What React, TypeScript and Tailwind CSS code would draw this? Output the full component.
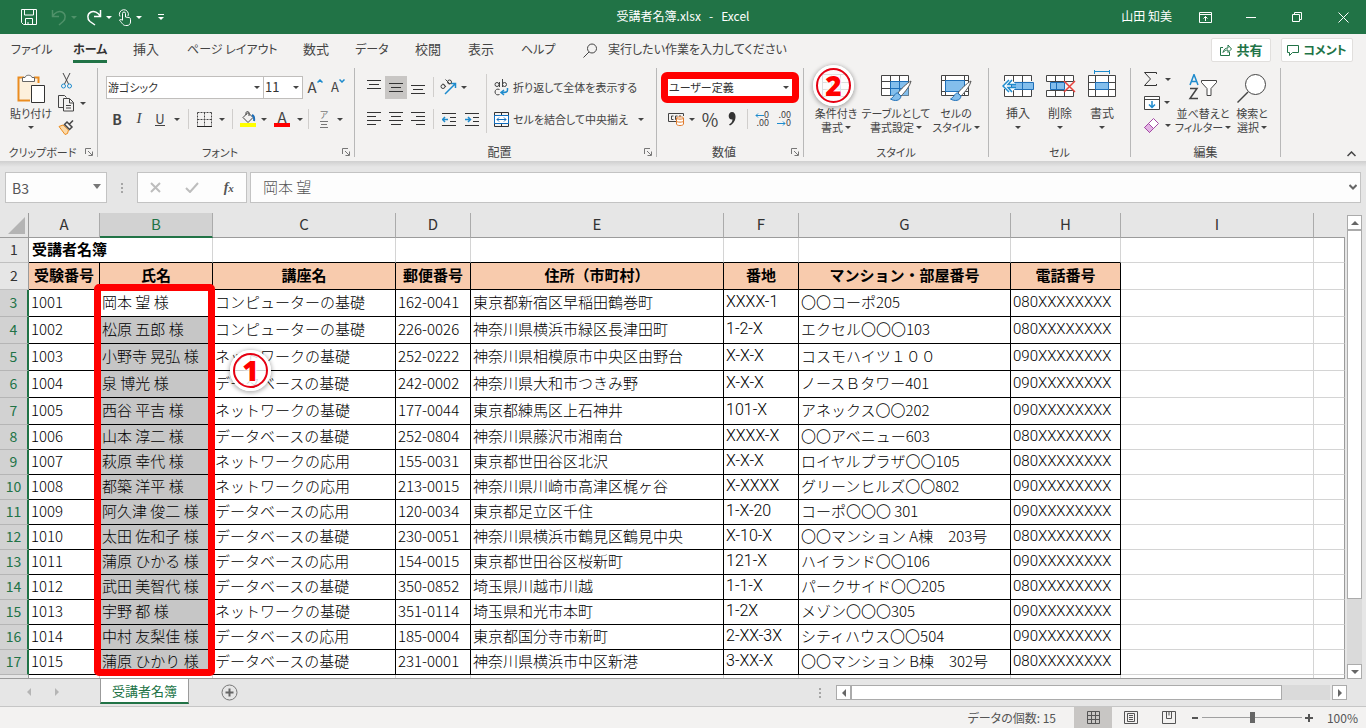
import type { ReactNode } from "react";
import clsx from "clsx";

const TABS = [
  { label: "ファイル", width: "w-[62px]", small: true },
  { label: "ホーム", width: "w-[60px]", small: true, active: true },
  { label: "挿入", width: "w-[54px]" },
  { label: "ページ レイアウト", width: "w-[116px]", small: true },
  { label: "数式", width: "w-[52px]" },
  { label: "データ", width: "w-[60px]", small: true },
  { label: "校閲", width: "w-[53px]" },
  { label: "表示", width: "w-[53px]" },
  { label: "ヘルプ", width: "w-[62px]", small: true },
];

const COLUMNS = [
  { letter: "A", width: "w-[71px]", title: "受験番号" },
  { letter: "B", width: "w-[113px]", title: "氏名" },
  { letter: "C", width: "w-[183px]", title: "講座名" },
  { letter: "D", width: "w-[75px]", title: "郵便番号" },
  { letter: "E", width: "w-[253px]", title: "住所（市町村）" },
  { letter: "F", width: "w-[75px]", title: "番地" },
  { letter: "G", width: "w-[212px]", title: "マンション・部屋番号" },
  { letter: "H", width: "w-[110px]", title: "電話番号" },
];

const ROWS = [
  ["1001", "岡本 望 様", "コンピューターの基礎", "162-0041", "東京都新宿区早稲田鶴巻町", "XXXX-1", "〇〇コーポ205", "080XXXXXXXX"],
  ["1002", "松原 五郎 様", "コンピューターの基礎", "226-0026", "神奈川県横浜市緑区長津田町", "1-2-X", "エクセル〇〇〇103", "080XXXXXXXX"],
  ["1003", "小野寺 晃弘 様", "ネットワークの基礎", "252-0222", "神奈川県相模原市中央区由野台", "X-X-X", "コスモハイツ１００", "090XXXXXXXX"],
  ["1004", "泉 博光 様", "データベースの基礎", "242-0002", "神奈川県大和市つきみ野", "X-X-X", "ノースＢタワー401", "090XXXXXXXX"],
  ["1005", "西谷 平吉 様", "ネットワークの基礎", "177-0044", "東京都練馬区上石神井", "101-X", "アネックス〇〇202", "090XXXXXXXX"],
  ["1006", "山本 淳二 様", "データベースの基礎", "252-0804", "神奈川県藤沢市湘南台", "XXXX-X", "〇〇アベニュー603", "080XXXXXXXX"],
  ["1007", "萩原 幸代 様", "ネットワークの応用", "155-0031", "東京都世田谷区北沢", "X-X-X", "ロイヤルプラザ〇〇105", "080XXXXXXXX"],
  ["1008", "都築 洋平 様", "ネットワークの応用", "213-0015", "神奈川県川崎市高津区梶ヶ谷", "X-XXXX", "グリーンヒルズ〇〇802", "090XXXXXXXX"],
  ["1009", "阿久津 俊二 様", "データベースの応用", "120-0034", "東京都足立区千住", "1-X-20", "コーポ〇〇〇 301", "090XXXXXXXX"],
  ["1010", "太田 佐和子 様", "データベースの基礎", "230-0051", "神奈川県横浜市鶴見区鶴見中央", "X-10-X", "〇〇マンション A棟　203号", "080XXXXXXXX"],
  ["1011", "蒲原 ひかる 様", "データベースの応用", "154-0015", "東京都世田谷区桜新町", "121-X", "ハイランド〇〇106", "090XXXXXXXX"],
  ["1012", "武田 美智代 様", "データベースの基礎", "350-0852", "埼玉県川越市川越", "1-1-X", "パークサイド〇〇205", "080XXXXXXXX"],
  ["1013", "宇野 都 様", "ネットワークの基礎", "351-0114", "埼玉県和光市本町", "1-2X", "メゾン〇〇〇305", "090XXXXXXXX"],
  ["1014", "中村 友梨佳 様", "データベースの応用", "185-0004", "東京都国分寺市新町", "2-XX-3X", "シティハウス〇〇504", "090XXXXXXXX"],
  ["1015", "蒲原 ひかり 様", "データベースの基礎", "231-0001", "神奈川県横浜市中区新港", "3-XX-X", "〇〇マンション B棟　302号", "080XXXXXXXX"],
];

export default function App() {
  return (
    <div className="flex h-screen flex-col overflow-hidden bg-[#e6e6e6] font-['Noto_Sans_CJK_JP',sans-serif] text-[#444444]">
      <TitleBar />
      <TabBar />
      <Ribbon />
      <FormulaBar />
      <Sheet />
      <SheetTabs />
      <StatusBar />
    </div>
  );
}

function Svg({ w, h, children, className }: { w: number; h: number; children: ReactNode; className?: string }) {
  return (
    <svg width={w} height={h} viewBox={`0 0 ${w} ${h}`} fill="none" stroke="currentColor" aria-hidden="true" className={clsx("shrink-0", className)}>
      {children}
    </svg>
  );
}

function Caret() {
  return (
    <Svg w={6} h={3}>
      <path d="M0 0h6L3 3z" fill="currentColor" stroke="none" />
    </Svg>
  );
}

/* ---------- title bar ---------- */

function TitleBar() {
  return (
    <header className="grid h-[34px] shrink-0 grid-cols-[1fr_auto_1fr] items-center bg-[#217346] text-xs text-white">
      <div className="flex items-center pl-5">
        <TitleButton label="上書き保存" className="w-[31px]">
          <Svg w={18} h={18}>
            <path d="M1.5 1.5h15v15H3.5l-2-2zM4.5 2v5h9V2M5.5 16v-5.500h7V16M8 14v2" />
          </Svg>
        </TitleButton>
        <TitleButton label="元に戻す" className="w-[35px] text-[#4f9169]">
          <Svg w={16} h={17}>
            <path d="M1.500 1v6.500H8M1.500 7.500C4 3.500 8 1.500 11 3c4 2 4 7 1 9.500L8 16" strokeWidth="1.500" />
          </Svg>
          <Caret />
        </TitleButton>
        <TitleButton label="やり直し" className="w-[32px]">
          <Svg w={16} h={17}>
            <path d="M14.500 1v6.500H8M14.500 7.500C12 3.500 8 1.500 5 3 1 5 1 10 4 12.500L9 16" strokeWidth="1.500" />
          </Svg>
          <Caret />
        </TitleButton>
        <TitleButton label="タッチ/マウス モードの切り替え" className="w-[40px]">
          <Svg w={14} h={18}>
            <path d="M4.500 12V5.500a1.500 1.500 0 0 1 3 0V9l3.500.5c1 .2 1.500.8 1.500 1.800V14c0 2-1.500 3.500-3.500 3.500H7.500c-2 0-3-1.500-6-5.500 1-1 2-.5 3 .5" />
            <path d="M2 8.500a4.500 4.500 0 1 1 8-.5" />
          </Svg>
          <Caret />
        </TitleButton>
        <TitleButton label="クイック アクセス ツール バーのカスタマイズ" className="w-5">
          <Svg w={6} h={6}>
            <path d="M0 .5h6" />
            <path d="M0 3h6L3 6z" fill="currentColor" stroke="none" />
          </Svg>
        </TitleButton>
      </div>
      <h1 className="pb-0.5 leading-5 whitespace-pre">受講者名簿.xlsx&nbsp;&nbsp; -&nbsp;&nbsp; Excel</h1>
      <div className="flex items-center justify-end">
        <span className="pr-2.5 pb-0.5 leading-5">山田 知美</span>
        <TitleButton label="リボンの表示オプション" className="w-[46px]">
          <Svg w={13} h={11}>
            <path d="M.5.5h12v10H.5zM1 2.500h11M6.500 9V4.500M4.500 6.500l2-2 2 2" />
          </Svg>
        </TitleButton>
        <TitleButton label="最小化" className="w-[46px]">
          <Svg w={10} h={1}>
            <path d="M0 .5h10" />
          </Svg>
        </TitleButton>
        <TitleButton label="元に戻す (縮小)" className="w-[46px]">
          <Svg w={10} h={10}>
            <path d="M.5 2.500h7v7h-7zM2.500 2V.5h7v7H8" />
          </Svg>
        </TitleButton>
        <TitleButton label="閉じる" className="w-[46px]">
          <Svg w={11} h={11}>
            <path d="M.5.5l10 10M10.500.5l-10 10" />
          </Svg>
        </TitleButton>
      </div>
    </header>
  );
}

function TitleButton({ label, className, children }: { label: string; className: string; children: ReactNode }) {
  return (
    <button type="button" aria-label={label} className={clsx("flex h-8 items-center gap-1", className, className === "w-[46px]" && "justify-center")}>
      {children}
    </button>
  );
}

/* ---------- ribbon tabs ---------- */

function TabBar() {
  return (
    <nav className="flex h-8 shrink-0 items-center bg-[#f3f2f1] pl-[11px] [font-feature-settings:'palt']">
      {TABS.map((tab) => (
        <div key={tab.label} className={clsx("flex shrink-0", tab.width)}>
          <button
            type="button"
            className={clsx(
              "h-[26px] border-b-3 leading-5 whitespace-nowrap",
              tab.small ? "text-xs leading-5" : "text-[13px]",
              tab.active ? "border-[#217346] font-bold text-[#333333]" : "border-transparent",
            )}
          >
            {tab.label}
          </button>
        </div>
      ))}
      <label className="flex min-w-0 flex-1 items-center gap-2.5">
        <Svg w={15} h={15}>
          <circle cx="9" cy="5.500" r="4.500" />
          <path d="M6 9L.5 14.500" />
        </Svg>
        <input
          aria-label="操作アシスト"
          placeholder="実行したい作業を入力してください"
          className="h-5 w-[220px] bg-transparent pb-0.5 text-xs leading-5 outline-none placeholder:text-[#444444]"
        />
      </label>
      <div className="flex gap-2.5 pr-[13px] text-[#217346]">
        <button type="button" className="flex h-6 w-[60px] items-center justify-center gap-1 rounded-xs border border-[#e1dfdd] bg-white text-[13px] font-bold">
          <Svg w={13} h={12}>
            <path d="M4 3.500H1.500v8h9V8M4 8.500c.5-3 2.500-4.500 5-4.500V1l3.500 4L9 8.500V6C7 6 5.500 6.500 4 8.500z" />
          </Svg>
          共有
        </button>
        <button type="button" className="flex h-6 w-[72px] items-center justify-center gap-1 rounded-xs border border-[#e1dfdd] bg-white text-xs font-bold">
          <Svg w={12} h={11}>
            <path d="M.5.5h11v7H5.500l-3 3v-3h-2z" />
          </Svg>
          コメント
        </button>
      </div>
    </nav>
  );
}

/* ---------- ribbon ---------- */

function Ribbon() {
  return (
    <section className="shrink-0 text-xs [font-feature-settings:'palt']">
      <div className="flex h-[95px] bg-[#f3f2f1] pt-0.5">
        <ClipboardGroup />
        <FontGroup />
        <AlignmentGroup />
        <NumberGroup />
        <StyleGroup />
        <CellsGroup />
        <EditingGroup />
        <div className="flex flex-1 items-end justify-end pr-2.5 pb-1">
          <button type="button" aria-label="リボンを折りたたむ">
            <Svg w={9} h={6}>
              <path d="M.5 5l4-4 4 4" strokeWidth="1.500" />
            </Svg>
          </button>
        </div>
      </div>
      <div className="h-1.5 bg-linear-to-b from-[#cfcfcf] to-[#e6e6e6]" />
    </section>
  );
}

function RibbonGroup({ label, width, launcher, small, children }: { label: string; width: string; launcher?: boolean; small?: boolean; children: ReactNode }) {
  return (
    <div className={clsx("flex shrink-0", width)}>
      <div className="flex min-w-0 flex-1 flex-col">
        <div className="flex h-[75px]">{children}</div>
        <div className="flex h-[18px] items-center">
          <span className={clsx("flex-1 text-center whitespace-nowrap", small && "text-[11px]")}>{label}</span>
          {launcher && (
            <button type="button" aria-label={`${label}の設定`} className="pr-1">
              <Svg w={8} h={8}>
                <path d="M.5 6V.5H6M3 3l4 4M7.500 3.500v4h-4" stroke="#777777" />
              </Svg>
            </button>
          )}
        </div>
      </div>
      <div className="h-[89px] w-px bg-[#b8b8b8]" />
    </div>
  );
}

function Tool({ label, className, active, children }: { label: string; className?: string; active?: boolean; children: ReactNode }) {
  return (
    <button type="button" aria-label={label} className={clsx("flex h-[23px] shrink-0 items-center justify-center", active && "bg-[#c8c6c4]", className ?? "w-[22px]")}>
      {children}
    </button>
  );
}

function Divider() {
  return (
    <div className="flex w-2 shrink-0 justify-center">
      <div className="h-5 w-px bg-[#d0cecc]" />
    </div>
  );
}

function BigButton({ lines, width, icon, small }: { lines: string[]; width: string; icon: ReactNode; small?: boolean }) {
  return (
    <button type="button" className={clsx("flex shrink-0 flex-col items-center pt-1.5 whitespace-nowrap", small ? "text-[11px] leading-[14px]" : "text-xs leading-[14px]", width)}>
      <span className="flex h-8 justify-center">{icon}</span>
      <span>{lines[0]}</span>
      <span className="flex h-[14px] items-center gap-0.5">
        {lines[1]}
        <Caret />
      </span>
    </button>
  );
}

function ClipboardGroup() {
  return (
    <RibbonGroup label="クリップボード" width="w-[98px]" launcher small>
      <div className="pl-1">
        <BigButton
          lines={["貼り付け"]}
          width="w-[54px]"
          small
          icon={
            <Svg w={28} h={31}>
              <path d="M7 3.500H1.500v23H13M17 3.500h4.500V9" stroke="#eb8c1f" strokeWidth="2" />
              <path d="M3 5h3v2h11V5h3v6h-6v14H3z" fill="#fdf0dc" stroke="none" />
              <path d="M5.500 7.500v-4H8c.5-3 6.500-3 7 0h2.500v4z" fill="#fff" stroke="#666" />
              <path d="M14.500 11.500h13v17h-13z" fill="#fff" stroke="#333" />
            </Svg>
          }
        />
      </div>
      <div className="flex flex-col pt-px">
        <Tool label="切り取り" className="w-4">
          <Svg w={11} h={16}>
            <path d="M2 0l5.500 11M9 0L3.500 11" stroke="#444" />
            <circle cx="2.500" cy="13" r="2" stroke="#1e8bcd" />
            <circle cx="8.500" cy="13" r="2" stroke="#1e8bcd" />
          </Svg>
        </Tool>
        <Tool label="コピー" className="w-7 gap-1.5">
          <Svg w={16} h={17}>
            <path d="M5 12.500H.5V.5h6l2 2M5.500 3.500h6l4 4v8.500h-10zM11.500 4v4h4M8 10.500h5M8 13h5" />
          </Svg>
          <Caret />
        </Tool>
        <Tool label="書式のコピー/貼り付け" className="w-4">
          <Svg w={17} h={16}>
            <path d="M1 7.500l4-1.500 5.500 5-1 3.500L7 15.500z" fill="#fbd9a8" stroke="#eb8c1f" />
            <path d="M6.500 5.500L9 3l5 5-2.500 2.500zM11 5.500L15 1.500" stroke="#444" strokeWidth="1.500" />
          </Svg>
        </Tool>
      </div>
    </RibbonGroup>
  );
}

function FontGroup() {
  return (
    <RibbonGroup label="フォント" width="w-[257px]" launcher small>
      <div className="flex flex-1 flex-col pt-[3px] pl-2">
        <div className="flex h-8 items-center">
          <SelectBox label="フォント名" value="游ゴシック" className="w-[158px] text-[11px]" />
          <SelectBox label="フォント サイズ" value="11" className="-ml-px w-10 text-[13px]" />
          <Tool label="フォント サイズの拡大" className="w-6 text-[15px]">
            A
            <Svg w={6} h={4} className="mb-3">
              <path d="M.5 3.500L3 1l2.500 2.500" stroke="#1e8bcd" strokeWidth="1.500" />
            </Svg>
          </Tool>
          <Tool label="フォント サイズの縮小" className="w-[22px] text-[13px]">
            A
            <Svg w={6} h={4} className="mb-3">
              <path d="M.5.5L3 3 5.500.5" stroke="#1e8bcd" strokeWidth="1.500" />
            </Svg>
          </Tool>
        </div>
        <div className="flex h-8 items-center">
          <Tool label="太字">
            <span className="text-sm font-bold">B</span>
          </Tool>
          <Tool label="斜体">
            <span className="font-['Liberation_Serif',serif] text-[15px] italic">I</span>
          </Tool>
          <Tool label="下線" className="w-5">
            <span className="border-b border-current text-[13px] leading-[13px]">U</span>
          </Tool>
          <Tool label="下線の種類" className="w-[14px]">
            <Caret />
          </Tool>
          <Divider />
          <Tool label="罫線" className="w-6">
            <Svg w={15} h={15}>
              <path d="M.5.5h14M.5.5v13M14.500.5v13M7.500.5v13M.5 7.500h14" strokeDasharray="2 1" />
              <path d="M0 14.500h15" stroke="#222" />
            </Svg>
          </Tool>
          <Tool label="罫線の種類" className="w-3">
            <Caret />
          </Tool>
          <Divider />
          <Tool label="塗りつぶしの色" className="w-6">
            <Svg w={16} h={16}>
              <path d="M8 1.500l5 5-5 5-5-5zM6 4V2c0-2 3-2 3 0v3" stroke="#444" />
              <path d="M12 4c2 1 2.500 3 2 6" stroke="#1e6fb8" strokeWidth="2" />
              <path d="M0 12h16v4H0z" fill="#ffff00" stroke="none" />
            </Svg>
          </Tool>
          <Tool label="塗りつぶしの色の選択" className="w-2">
            <Caret />
          </Tool>
          <Tool label="フォントの色" className="w-7">
            <span className="w-4 border-b-4 border-[#ff0000] text-center text-[15px] leading-3">A</span>
          </Tool>
          <Tool label="フォントの色の選択" className="w-2">
            <Caret />
          </Tool>
          <Divider />
          <Tool label="ふりがなの表示" className="w-6">
            <span className="flex flex-col items-center gap-0.5 text-[9px] leading-[9px] text-[#777777]">
              <span>ア</span>
              <Svg w={8} h={7}>
                <path d="M0 .5h8M1 3.500h6M0 6.500h8" />
              </Svg>
            </span>
          </Tool>
          <Tool label="ふりがなの設定" className="w-2">
            <Caret />
          </Tool>
        </div>
      </div>
    </RibbonGroup>
  );
}

function SelectBox({ label, value, className }: { label: string; value: string; className: string }) {
  return (
    <div className={clsx("relative shrink-0", className)}>
      <select aria-label={label} defaultValue={value} className="h-[23px] w-full appearance-none border border-[#c0bebc] bg-white px-px leading-5 text-[#333333] outline-none">
        <option>{value}</option>
      </select>
      <span className="pointer-events-none absolute top-2.5 right-1">
        <Caret />
      </span>
    </div>
  );
}

function Lines({ d }: { d: string }) {
  return (
    <Svg w={14} h={14}>
      <path d={d} stroke="#333" />
    </Svg>
  );
}

function AlignmentGroup() {
  return (
    <RibbonGroup label="配置" width="w-[302px]" launcher>
      <div className="flex w-[131px] shrink-0 flex-col pt-[3px] pl-2">
        <div className="flex h-8 items-center">
          <Tool label="上揃え">
            <Lines d="M0 .5h14M2 4.500h10M0 8.500h14" />
          </Tool>
          <Tool label="上下中央揃え" active>
            <Lines d="M0 3.500h14M2 7.500h10M0 11.500h14" />
          </Tool>
          <Tool label="下揃え">
            <Lines d="M0 5.500h14M2 9.500h10M0 13.500h14" />
          </Tool>
          <Divider />
          <Tool label="方向" className="w-8 gap-1">
            <Svg w={17} h={16}>
              <path d="M5 15L15.500 4.500M11 4.500h4.500V9" stroke="#1e8bcd" strokeWidth="1.500" />
              <circle cx="3" cy="7.500" r="2" />
              <path d="M3 4.500l3 3.500" />
              <path d="M5.500.5L10 5" />
              <circle cx="9.500" cy="3" r="2" />
            </Svg>
            <Caret />
          </Tool>
        </div>
        <div className="flex h-8 items-center">
          <Tool label="左揃え">
            <Lines d="M0 .5h14M0 4.500h9M0 8.500h14M0 12.500h9" />
          </Tool>
          <Tool label="中央揃え">
            <Lines d="M0 .5h14M2 4.500h10M0 8.500h14M2 12.500h10" />
          </Tool>
          <Tool label="右揃え">
            <Lines d="M0 .5h14M5 4.500h9M0 8.500h14M5 12.500h9" />
          </Tool>
          <Divider />
          <Tool label="インデントを減らす" className="w-6">
            <Svg w={14} h={13}>
              <path d="M0 .5h14M8 4.500h6M8 8.500h6M0 12.500h14" stroke="#333" />
              <path d="M6 6.500H1M3 4l-2.500 2.500L3 9" stroke="#1e8bcd" strokeWidth="1.500" />
            </Svg>
          </Tool>
          <Tool label="インデントを増やす">
            <Svg w={14} h={13}>
              <path d="M0 .5h14M8 4.500h6M8 8.500h6M0 12.500h14" stroke="#333" />
              <path d="M0 6.500h5M3 4l2.500 2.500L3 9" stroke="#1e8bcd" strokeWidth="1.500" />
            </Svg>
          </Tool>
        </div>
      </div>
      <div className="mt-1.5 h-[59px] w-px bg-[#d0cecc]" />
      <div className="flex flex-1 flex-col pt-[3px] pl-[7px] text-[11px] whitespace-nowrap">
        <button type="button" className="flex h-8 items-center gap-1">
          <Svg w={15} h={17}>
            <circle cx="3" cy="5.500" r="2" />
            <path d="M5.500 3v5M8.500 0v8M5.500 10.500c-2-1-4.500 0-4.500 2.500s2.500 3.500 4.500 2.500" />
            <circle cx="10.500" cy="5.500" r="2" />
            <path d="M13.500 9v2c0 2-1 2.500-6 2.500M10 11l-3 2.500 3 2.500" stroke="#1e8bcd" strokeWidth="1.500" />
          </Svg>
          折り返して全体を表示する
        </button>
        <button type="button" className="flex h-8 items-center gap-1">
          <Svg w={15} h={15}>
            <path d="M.5.5h14v14H.5zM7.500 0v3M7.500 12v3" stroke="#333" />
            <path d="M.5 3.500h14v8H.5z" fill="#fff" stroke="#0f6cbd" />
            <path d="M3 7.500h9M5 5.500l-2 2 2 2M10 5.500l2 2-2 2" stroke="#0f6cbd" />
          </Svg>
          <span className="pr-1.5">セルを結合して中央揃え</span>
          <Caret />
        </button>
      </div>
    </RibbonGroup>
  );
}

function NumberGroup() {
  return (
    <RibbonGroup label="数値" width="w-[147px]" launcher>
      <div className="flex flex-1 flex-col pt-[3px] pl-2.5">
        <div className="flex h-8 items-center">
          <div className="relative">
            <SelectBox label="表示形式" value="ユーザー定義" className="w-[126px] text-[11px]" />
            <div className="pointer-events-none absolute -inset-x-1.5 -inset-y-1 rounded-md border-7 border-[#ff0000]" />
          </div>
        </div>
        <div className="flex h-8 items-center">
          <Tool label="通貨表示形式" className="w-[18px]">
            <Svg w={17} h={14}>
              <path d="M8 9.500H.5v-8h15V4M5.500 4h-2v3.500h2M9.500 4h-2v3.500h1M13 4h-2" stroke="#444" />
              <path d="M8.500 6v6c0 2 7 2 7 0V6c0-1.500-7-1.500-7 0c0 1.500 7 1.500 7 0M8.500 9c0 1.500 7 1.500 7 0" fill="#fff" stroke="#e07b2c" />
            </Svg>
          </Tool>
          <Tool label="通貨の選択" className="w-[14px]">
            <Caret />
          </Tool>
          <Tool label="パーセント スタイル">
            <span className="text-lg leading-5">%</span>
          </Tool>
          <Tool label="桁区切りスタイル">
            <Svg w={8} h={14}>
              <path d="M4 0c5 0 5 10-2 13.500L1 12.500c2-1 3.500-3 3.500-5C-1 8 0 0 4 0z" fill="#333" stroke="none" />
            </Svg>
          </Tool>
          <Divider />
          <Tool label="小数点以下の表示桁数を増やす">
            <span className="flex flex-col items-end text-[9px] leading-2">
              <span className="flex items-center">
                <Svg w={9} h={5}>
                  <path d="M9 2.500H1M3 .5l-2 2 2 2" stroke="#1e8bcd" />
                </Svg>
                0
              </span>
              <span>.00</span>
            </span>
          </Tool>
          <Tool label="小数点以下の表示桁数を減らす">
            <span className="flex flex-col items-end text-[9px] leading-2">
              <span>.00</span>
              <span className="flex items-center">
                <Svg w={9} h={5}>
                  <path d="M0 2.500h8M6 .5l2 2-2 2" stroke="#1e8bcd" />
                </Svg>
                0
              </span>
            </span>
          </Tool>
        </div>
      </div>
    </RibbonGroup>
  );
}

function Brush() {
  return (
    <>
      <path d="M30 7c-4 2-11 9-13 12l3 3c4-4 9-10 10-15z" fill="#fff" stroke="#555" />
      <path d="M16.500 19c-3 0-3 4-7 6 4 2.500 10 2 10.500-3z" fill="#83beec" stroke="#1e6fb8" />
    </>
  );
}

function StyleGroup() {
  return (
    <RibbonGroup label="スタイル" width="w-[185px]" small>
      <div className="relative flex pl-0.5">
        <BigButton
          lines={["条件付き", "書式"]}
          width="w-[60px]"
          small
          icon={
            <Svg w={28} h={28}>
              <path d="M.5.5h27v22H.5zM9.500 0v22M18.500 0v22M0 8.500h28M0 15.500h28" stroke="#555" />
              <path d="M9.500 8.500h9v7h-9z" fill="#83beec" stroke="#1e6fb8" />
            </Svg>
          }
        />
        <BigButton
          lines={["テーブルとして", "書式設定"]}
          width="w-[60px]"
          small
          icon={
            <Svg w={31} h={28}>
              <path d="M.5 1.500h27v20H.5z" fill="#fff" stroke="#444" />
              <path d="M9.500 7.500h18v14h-18z" fill="#83beec" stroke="none" />
              <path d="M9.500 1.500v20M18.500 1.500v6M.5 7.500h27M.5 14.500h9" stroke="#444" />
              <path d="M9.500 7.500v14M18.500 7.500v14M9.500 7.500h18M9.500 14.500h18" stroke="#1e6fb8" />
              <Brush />
            </Svg>
          }
        />
        <BigButton
          lines={["セルの", "スタイル"]}
          width="w-[60px]"
          small
          icon={
            <Svg w={31} h={28}>
              <path d="M.5 1.500h27v20H.5zM4.500 1.500v20M23.500 1.500v20M.5 6.500h27M.5 17.500h27" fill="#fff" stroke="#444" />
              <path d="M4.500 6.500h19v11h-19z" fill="#83beec" stroke="#1e6fb8" />
              <Brush />
            </Svg>
          }
        />
        <div className="absolute -top-[3px] left-[9px]">
          <StepBadge value="2" />
        </div>
      </div>
    </RibbonGroup>
  );
}

function CellsGroup() {
  return (
    <RibbonGroup label="セル" width="w-[142px]" small>
      <div className="flex pl-2">
        <BigButton
          lines={["挿入"]}
          width="w-[42px]"
          icon={
            <Svg w={32} h={24}>
              <path d="M2.500 7V1.500h27V7M2.500 15v7.500h27V15M11.500 1.500v21M20.500 1.500v21" fill="#fff" stroke="#444" />
              <path d="M9.500 8.500h22v7h-22zM20.500 8.500v7" fill="#83beec" stroke="#1e6fb8" />
              <path d="M14 10.500H6L10 6M14 13.500H6l4 4.500M7 6l-6 6 6 6" fill="#fff" stroke="#1e8bcd" strokeWidth="1.500" />
            </Svg>
          }
        />
        <BigButton
          lines={["削除"]}
          width="w-[42px]"
          icon={
            <Svg w={31} h={24}>
              <path d="M1.500 7.500v-6h27v6zM1.500 16.500v6h27v-6zM10.500 1.500v6M19.500 1.500v6M10.500 16.500v6M19.500 16.500v6" fill="#fff" stroke="#444" />
              <path d="M5.500 8.500h14v7h-14zM11.500 8.500v7" fill="#83beec" stroke="#1e6fb8" />
              <path d="M19 7l11 11M30 7L19 18" stroke="#e8413b" strokeWidth="1.500" />
            </Svg>
          }
        />
        <BigButton
          lines={["書式"]}
          width="w-[42px]"
          icon={
            <Svg w={28} h={28} className="-mt-1">
              <path d="M6.500 0v4M21.500 0v4M6.500 1.500h15" stroke="#1e8bcd" />
              <path d="M.5 5.500h27v21H.5zM7.500 5.500v21M20.500 5.500v21M.5 12.500h27M.5 19.500h27" fill="#fff" stroke="#444" />
              <path d="M7.500 12.500h13v7h-13z" fill="#83beec" stroke="#1e6fb8" />
            </Svg>
          }
        />
      </div>
    </RibbonGroup>
  );
}

function EditingGroup() {
  return (
    <RibbonGroup label="編集" width="w-[150px]">
      <div className="flex flex-col pl-2.5">
        <Tool label="オート SUM" className="w-8 gap-2">
          <Svg w={13} h={15}>
            <path d="M12.500 2V.5H.5l6 6.500-6 6.500h12V12" stroke="#333" />
          </Svg>
          <Caret />
        </Tool>
        <Tool label="フィル" className="w-8 gap-1">
          <Svg w={16} h={14}>
            <path d="M.5.5h15v13H.5zM.5 3.500h15" fill="#fff" stroke="#444" />
            <path d="M8 5v6.500M5 8.500l3 3 3-3" stroke="#1e8bcd" strokeWidth="1.500" />
          </Svg>
          <Caret />
        </Tool>
        <Tool label="クリア" className="w-8 gap-1.5">
          <Svg w={15} h={15}>
            <path d="M9.500.5l5 5-9 9-5-5z" fill="#fff" stroke="#a349a4" />
            <path d="M4.500 5.500l5 5-4 4-5-5z" fill="#e3b3e4" stroke="#a349a4" />
          </Svg>
          <Caret />
        </Tool>
      </div>
      <div className="flex pl-0.5">
        <BigButton
          lines={["並べ替えと", "フィルター"]}
          width="w-14"
          small
          icon={
            <Svg w={30} h={28}>
              <path d="M2 11L6 .5 10 11M3.500 7.500h5" stroke="#1e8bcd" strokeWidth="1.500" />
              <path d="M2 14.500h7l-7 10h8" stroke="#444" strokeWidth="1.500" />
              <path d="M13.500 6.500h15v2l-5.500 6v7h-4v-7l-5.500-6z" fill="#fff" stroke="#444" />
            </Svg>
          }
        />
        <BigButton
          lines={["検索と", "選択"]}
          width="w-[42px]"
          small
          icon={
            <Svg w={30} h={30}>
              <circle cx="18.500" cy="10.500" r="10" fill="#fff" stroke="#444" />
              <path d="M11 18L.5 28.500" stroke="#444" strokeWidth="1.500" />
            </Svg>
          }
        />
      </div>
    </RibbonGroup>
  );
}

/* Numbered step marker that floats over the window. */
function StepBadge({ value }: { value: string }) {
  return (
    <div className="pointer-events-none rounded-full border-3 border-white shadow-[0_1px_4px_1px_rgba(0,0,0,0.3)]">
      <div className="flex size-[35px] items-center justify-center rounded-full border-2 border-[#e60012] bg-white/80 pb-0.5 font-['Noto_Sans',sans-serif] text-[28px] leading-none font-black text-[#ff0000] [text-shadow:0_0_3px_#fff,0_0_3px_#fff,0_0_2px_#fff]">
        {value}
      </div>
    </div>
  );
}

/* ---------- formula bar ---------- */

function FormulaBar() {
  return (
    <section className="flex h-[46px] shrink-0 items-start px-[5px] pt-[5px] text-[#555555]">
      <label className="relative w-[102px] shrink-0">
        <input aria-label="名前ボックス" defaultValue="B3" className="h-[31px] w-full border border-[#c3c3c3] bg-[#fdfdfd] px-1.5 text-sm outline-none" />
        <Svg w={8} h={5} className="absolute top-3 right-1.5">
          <path d="M0 0h8L4 5z" fill="#777" stroke="none" />
        </Svg>
      </label>
      <div className="flex h-[31px] w-[30px] shrink-0 items-center justify-center">
        <VerticalDots />
      </div>
      <div className="flex h-[31px] w-[110px] shrink-0 items-center justify-around border border-[#c3c3c3] bg-[#fdfdfd]">
        <button type="button" aria-label="キャンセル">
          <Svg w={11} h={11}>
            <path d="M1 1l9 9M10 1l-9 9" stroke="#bdbdbd" strokeWidth="2" />
          </Svg>
        </button>
        <button type="button" aria-label="入力">
          <Svg w={14} h={11}>
            <path d="M1 6l4 4 8-9" stroke="#bdbdbd" strokeWidth="2" />
          </Svg>
        </button>
        <button type="button" aria-label="関数の挿入" className="font-['Liberation_Serif',serif] text-sm leading-5 font-bold italic">
          f<span className="text-[11px]">x</span>
        </button>
      </div>
      <label className="relative ml-[3px] min-w-0 flex-1">
        <input aria-label="数式バー" defaultValue="岡本 望" className="h-[31px] w-full border border-[#c3c3c3] bg-[#fdfdfd] px-3 pb-0.5 text-[15px] font-light outline-none" />
        <Svg w={8} h={6} className="absolute top-3 right-1">
          <path d="M.5 1L4 4.500 7.500 1" stroke="#666" strokeWidth="2" />
        </Svg>
      </label>
    </section>
  );
}

function VerticalDots() {
  return (
    <Svg w={2} h={10}>
      <path d="M0 0h2v2H0zM0 4h2v2H0zM0 8h2v2H0z" fill="#a6a6a6" stroke="none" />
    </Svg>
  );
}

/* ---------- sheet ---------- */

function Sheet() {
  return (
    <main className="relative flex min-h-0 flex-1">
      <div className="min-w-0 flex-1 overflow-hidden border-b border-[#9b9b9b]">
        <table className="w-full table-fixed border-separate border-spacing-0 text-[15px] leading-5 text-black">
          <colgroup>
            <col className="w-[29px]" />
            {COLUMNS.map((column) => (
              <col key={column.letter} className={column.width} />
            ))}
            <col className="w-[193px]" />
            <col />
          </colgroup>
          <thead>
            <tr className="h-[25px] bg-[#e6e6e6] text-[#333333]">
              <th className="border-r border-b border-[#9b9b9b] p-0">
                <Svg w={17} h={17} className="ml-2">
                  <path d="M17 0v17H0z" fill="#b4b4b4" stroke="none" />
                </Svg>
              </th>
              {COLUMNS.map((column) => (
                <th
                  key={column.letter}
                  scope="col"
                  className={clsx(
                    "border-r border-r-[#ababab] p-0 pb-0.5 font-normal",
                    column.letter === "B" ? "border-b-2 border-b-[#217346] bg-[#d2d2d2] text-[#217346]" : "border-b border-b-[#9b9b9b]",
                  )}
                >
                  {column.letter}
                </th>
              ))}
              <th scope="col" className="border-r border-b border-r-[#ababab] border-b-[#9b9b9b] p-0 pb-0.5 font-normal">
                I
              </th>
              <th className="border-b border-[#9b9b9b] p-0" />
            </tr>
          </thead>
          <tbody>
            <tr className="h-[25px] bg-white">
              <RowNumber value={1} />
              <th colSpan={2} className="border-r border-b border-r-[#d4d4d4] border-b-black p-0 pb-0.5 pl-[3px] text-left font-bold">
                受講者名簿
              </th>
              {COLUMNS.slice(2).map((column) => (
                <td key={column.letter} className="border-r border-b border-r-[#d4d4d4] border-b-black" />
              ))}
              <BlankCells />
            </tr>
            <tr className="h-[27px] bg-white">
              <RowNumber value={2} />
              {COLUMNS.map((column) => (
                <th key={column.letter} className="border-r border-b border-black bg-[#f8cbad] p-0 pb-0.5 font-bold whitespace-nowrap">
                  {column.title}
                </th>
              ))}
              <BlankCells />
            </tr>
            {ROWS.map((row, index) => (
              <tr key={row[0]} className={clsx("bg-white", index < 5 ? "h-[27px]" : "h-[25px]")}>
                <RowNumber value={index + 3} selected />
                {row.map((value, col) => (
                  <td
                    key={COLUMNS[col].letter}
                    className={clsx(
                      "border-r border-b border-black p-0 pb-0.5 pl-0.5 font-light whitespace-nowrap",
                      col === 1 && index > 0 && "bg-[#c6c6c6]",
                      col === 5 && "font-['Roboto',sans-serif] text-base leading-5",
                      col === 7 && "font-['Roboto',sans-serif]",
                    )}
                  >
                    {value}
                  </td>
                ))}
                <BlankCells />
              </tr>
            ))}
            <tr className="h-6 bg-white">
              <td className="border-r border-[#9b9b9b] bg-[#e6e6e6]" />
              {COLUMNS.map((column) => (
                <td key={column.letter} className="border-r border-[#d4d4d4]" />
              ))}
              <BlankCells />
            </tr>
          </tbody>
        </table>
      </div>
      <div className="flex w-[21px] shrink-0 flex-col">
        <div className="flex min-h-0 flex-1 flex-col pt-0.5 pr-1 pl-0.5">
          <ScrollButton label="上へスクロール" d="M0 4h8L4 0z" />
          <div className="min-h-0 flex-1 bg-[#dadada]">
            <div className="h-[85%] border border-[#ababab] bg-white" />
          </div>
          <ScrollButton label="下へスクロール" d="M0 0h8L4 4z" />
        </div>
      </div>
      <div className="pointer-events-none absolute top-[71px] left-[94px] h-[392px] w-[121px] rounded-[5px] border-7 border-[#ff0000]" />
      <div className="absolute top-[137px] left-[230px]">
        <StepBadge value="1" />
      </div>
    </main>
  );
}

function RowNumber({ value, selected }: { value: number; selected?: boolean }) {
  return (
    <th
      scope="row"
      className={clsx(
        "border-b p-0 pb-0.5 text-center text-sm leading-5 font-normal",
        selected ? "border-r-2 border-r-[#217346] border-b-[#b5b5b5] bg-[#d2d2d2] text-[#217346]" : "border-r border-r-[#9b9b9b] border-b-[#c0c0c0] bg-[#e6e6e6] text-[#333333]",
      )}
    >
      {value}
    </th>
  );
}

function BlankCells() {
  return (
    <>
      <td className="border-r border-b border-[#d4d4d4]" />
      <td className="border-r border-b border-r-[#9b9b9b] border-b-[#d4d4d4]" />
    </>
  );
}

function ScrollButton({ label, d, sideways }: { label: string; d: string; sideways?: boolean }) {
  return (
    <button type="button" aria-label={label} className="flex size-[15px] shrink-0 items-center justify-center border border-[#ababab] bg-white text-[#666666]">
      <Svg w={sideways ? 4 : 8} h={sideways ? 8 : 4}>
        <path d={d} fill="currentColor" stroke="none" />
      </Svg>
    </button>
  );
}

/* ---------- sheet tabs and status bar ---------- */

function SheetTabs() {
  return (
    <section className="flex h-7 shrink-0 items-start border-b border-[#c6c6c6]">
      <div className="flex h-[26px] w-[100px] items-center gap-6 pl-[27px] text-[#b5b5b5]">
        <button type="button" aria-label="前のシート">
          <Svg w={4} h={8}>
            <path d="M4 0v8L0 4z" fill="currentColor" stroke="none" />
          </Svg>
        </button>
        <button type="button" aria-label="次のシート">
          <Svg w={4} h={8}>
            <path d="M0 0v8l4-4z" fill="currentColor" stroke="none" />
          </Svg>
        </button>
      </div>
      <button type="button" className="h-[25px] w-[89px] shrink-0 border-x border-b-2 border-x-[#9b9b9b] border-b-[#217346] bg-white text-[13px] leading-5 text-[#217346]">
        受講者名簿
      </button>
      <button type="button" aria-label="新しいシート" className="ml-8 flex h-[26px] items-center">
        <Svg w={17} h={17}>
          <circle cx="8.500" cy="8.500" r="7.500" stroke="#777" />
          <path d="M8.500 4.500v8M4.500 8.500h8" stroke="#666" strokeWidth="2" />
        </Svg>
      </button>
      <div className="flex h-[27px] flex-1 items-center justify-end">
        <VerticalDots />
      </div>
      <div className="mr-[19px] ml-[15px] flex h-[27px] w-[511px] items-center">
        <ScrollButton label="左へスクロール" d="M4 0v8L0 4z" sideways />
        <div className="mr-0.5 h-[15px] flex-1 bg-[#dadada]">
          <div className="h-full w-[90%] border border-[#ababab] bg-white" />
        </div>
        <ScrollButton label="右へスクロール" d="M0 0v8l4-4z" sideways />
      </div>
    </section>
  );
}

function StatusBar() {
  return (
    <footer className="flex h-[21px] shrink-0 items-center justify-end bg-[#f3f2f1] pr-2 text-xs text-[#555555]">
      <span className="mr-[18px] leading-5 [font-feature-settings:'palt']">データの個数: 15</span>
      <button type="button" aria-label="標準" className="flex h-full w-[38px] items-center justify-center bg-[#c8c6c4]">
        <Svg w={13} h={13}>
          <path d="M.5.5h12v12H.5zM4.500 0v13M8.500 0v13M0 4.500h13M0 8.500h13" />
        </Svg>
      </button>
      <button type="button" aria-label="ページ レイアウト" className="flex h-full w-[38px] items-center justify-center">
        <Svg w={14} h={13}>
          <path d="M.5.5h13v12H.5zM3.500 2.500h7v8h-7zM5 4.500h4M5 6.500h4M5 8.500h4" />
        </Svg>
      </button>
      <button type="button" aria-label="改ページ プレビュー" className="flex h-full w-[38px] items-center justify-center">
        <Svg w={14} h={13}>
          <path d="M.5.5h13v12H.5zM4.500.5v7h5v-7M7 .5v4" />
        </Svg>
      </button>
      <button type="button" aria-label="縮小" className="flex h-full w-3.5 items-center justify-center">
        <Svg w={6} h={2}>
          <path d="M0 1h6" strokeWidth="2" />
        </Svg>
      </button>
      <input
        type="range"
        aria-label="ズーム"
        defaultValue={50}
        className="h-4 w-[100px] appearance-none bg-transparent [&::-webkit-slider-runnable-track]:h-px [&::-webkit-slider-runnable-track]:bg-[#a0a0a0] [&::-webkit-slider-thumb]:-mt-[5px] [&::-webkit-slider-thumb]:h-[11px] [&::-webkit-slider-thumb]:w-[5px] [&::-webkit-slider-thumb]:appearance-none [&::-webkit-slider-thumb]:bg-[#666666]"
      />
      <button type="button" aria-label="拡大" className="flex h-full w-3.5 items-center justify-center">
        <Svg w={8} h={8}>
          <path d="M0 4h8M4 0v8" strokeWidth="2" />
        </Svg>
      </button>
      <span className="w-[42px] text-right leading-5">100%</span>
    </footer>
  );
}
